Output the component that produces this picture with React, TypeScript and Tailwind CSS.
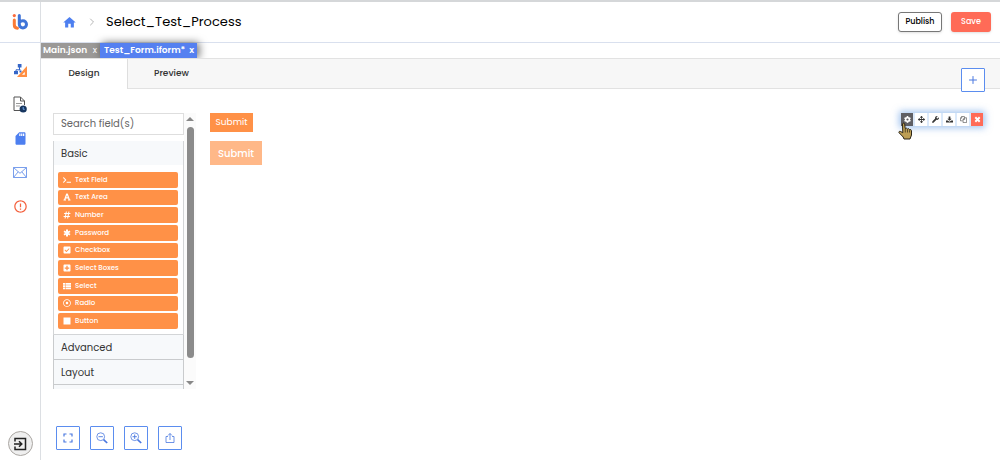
import { useState } from "react";
import {
  FaArrowsAlt, FaCheckSquare, FaCog, FaFont, FaHashtag,
  FaPlusSquare, FaRegDotCircle, FaTerminal, FaWrench,
} from "react-icons/fa";
import { MdHome, MdSdCard, MdErrorOutline } from "react-icons/md";
import { Plus, ChevronRight } from "lucide-react";

type IconProps = { className?: string };

function AsteriskIcon({ className }: IconProps) {
  return (
    <svg viewBox="0 0 16 16" className={className} stroke="currentColor" strokeWidth="4">
      <path d="M8 1v14M2 4.500l12 7M14 4.500l-12 7" />
    </svg>
  );
}

function ListIcon({ className }: IconProps) {
  return (
    <svg viewBox="0 0 16 16" className={className} fill="currentColor">
      <path d="M0 2h5v3.500H0zM6 2h10v3.500H6zM0 6.500h5V10H0zM6 6.500h10V10H6zM0 11h5v3.500H0zM6 11h10v3.500H6z" />
    </svg>
  );
}

function SquareIcon({ className }: IconProps) {
  return (
    <svg viewBox="0 0 16 16" className={className} fill="currentColor">
      <path d="M1 1h14v14H1z" />
    </svg>
  );
}

function PasteIcon({ className }: IconProps) {
  return (
    <svg viewBox="0 0 16 16" className={className} fill="currentColor">
      <path d="M6 1h4v5h3L8 11 3 6h3zM0 10h4l4 3 4-3h4v5H0z" />
    </svg>
  );
}

function CopyIcon({ className }: IconProps) {
  return (
    <svg viewBox="0 0 16 16" className={className} fill="none" stroke="currentColor" strokeWidth="1.500">
      <path d="M6 11H1V5l3-4h6v3M4 1v4H1M7 15V8l3-4h5v11zM10.500 4v4H7" />
    </svg>
  );
}

function CloseIcon({ className }: IconProps) {
  return (
    <svg viewBox="0 0 16 16" className={className} stroke="currentColor" strokeWidth="4.500">
      <path d="m3 3 10 10M13 3 3 13" />
    </svg>
  );
}

const fields = [
  { label: "Text Field", icon: FaTerminal },
  { label: "Text Area", icon: FaFont },
  { label: "Number", icon: FaHashtag },
  { label: "Password", icon: AsteriskIcon },
  { label: "Checkbox", icon: FaCheckSquare },
  { label: "Select Boxes", icon: FaPlusSquare },
  { label: "Select", icon: ListIcon },
  { label: "Radio", icon: FaRegDotCircle },
  { label: "Button", icon: SquareIcon },
];

function Logo() {
  return (
    <svg viewBox="0 0 16 18" className="w-4 h-[18px]" fill="none">
      <circle cx="2.3" cy="2.6" r="1.6" fill="#fb6b3c" />
      <path d="M2.300 7v4.500a3.600 3.600 0 0 0 3.200 3.700" stroke="#fb7a35" strokeWidth="3" strokeLinecap="round" />
      <path d="M7.300 2.500v8.800a3.600 3.600 0 1 0 3.600-3.600c-.8 0-1.400.2-2 .6" stroke="#3f74d8" strokeWidth="3" strokeLinecap="round" />
    </svg>
  );
}

function ProcessIcon() {
  return (
    <svg viewBox="0 0 13 13" className="size-[13px]">
      <path d="M5.500 3v3M2 8V5.800h4.500" stroke="#3566c8" strokeWidth="1" fill="none" />
      <path d="M3.800 0h3.700v3.500H3.800zM0 7h4v3.300H0zM5.500 6.500h2v2h-2z" fill="#3566c8" />
      <path fillRule="evenodd" d="M13 2v11H3zM10.800 8v2.800H8z" fill="#ff8f43" />
    </svg>
  );
}

function DocumentIcon() {
  return (
    <svg viewBox="0 0 14 17" className="w-[14px] h-[17px]" fill="none">
      <path d="M7.500 14.500H1V1h6.500l4 4v4M7.500 1v4h4" stroke="#555" strokeWidth="1" />
      <path d="M3 7.500h6M3 10h4" stroke="#999" strokeWidth="1" />
      <circle cx="10.200" cy="13" r="3.600" fill="#17365f" />
      <path d="M10.200 11v2.300h1.500" stroke="#73a6e8" strokeWidth="1" />
    </svg>
  );
}

function MailIcon() {
  return (
    <svg viewBox="0 0 14 11" className="w-[14px] h-[11px]" fill="none" stroke="#6b94ea" strokeWidth="0.9">
      <path d="M.5.5h13v10H.5zM.5.5 7 6.300l6.500-5.800M.5 10.500l4.700-5.700M13.500 10.500 8.800 4.800" />
    </svg>
  );
}

function FullscreenIcon() {
  return (
    <svg viewBox="0 0 12 12" className="size-3" fill="none" stroke="#4a78e0" strokeWidth="1.200">
      <path d="M2 4.500V2h2.500M7.500 2H10v2.500M10 7.500V10H7.500M4.500 10H2V7.500" />
    </svg>
  );
}

function ZoomIcon({ plus }: { plus?: boolean }) {
  return (
    <svg viewBox="0 0 12 12" className="size-3" fill="none" stroke="#4a78e0">
      <circle cx="4.700" cy="4.700" r="3.900" strokeWidth="0.800" />
      <path d={plus ? "M2.500 4.700h4.400M4.700 2.500v4.400" : "M2.500 4.700h4.400"} strokeWidth="0.900" />
      <path d="m7.600 7.600 3.600 3.400" strokeWidth="1.700" />
    </svg>
  );
}

function ShareIcon() {
  return (
    <svg viewBox="0 0 12 12" className="size-3" fill="none" stroke="#4a78e0" strokeWidth="0.800">
      <path d="M4 4.500H2v6h8v-6H8M6 8V1.500M4 3.500l2-2 2 2" />
    </svg>
  );
}

function ExitIcon() {
  return (
    <svg viewBox="0 0 14 14" className="size-[14px]" fill="none" stroke="#222" strokeWidth="1.500">
      <path d="M2 4.500V1.500h10.500v11H2V9.500M1 7h7.500M6 4.200 8.800 7 6 9.800" />
    </svg>
  );
}

function HandCursor() {
  return (
    <svg viewBox="0 0 14 18" className="absolute top-[9px] -left-[3px] w-[14px] h-[18px] pointer-events-none">
      <path
        d="M4.500 2c.2-1.200 1.900-1.200 2.200 0l.5 4.500 1.300-.3.900.8 1.300-.3.900.9 1.100-.1.800 1.300v4.200L12 17H6l-.8-2L1 10.700c-.5-1 .7-1.900 1.700-1.200l2.100 1.300z"
        fill="#bd9f55"
        stroke="#2c2618"
        strokeWidth="1"
      />
      <path d="M7.300 7v3.500M9.500 7.500v3M11.500 8.200v2.300" stroke="#2c2618" strokeWidth="0.700" />
    </svg>
  );
}

const navItems = [
  { label: "Processes", icon: <ProcessIcon /> },
  { label: "Forms", icon: <DocumentIcon /> },
  { label: "Storage", icon: <MdSdCard className="size-[15px] text-[#4d7ff0]" /> },
  { label: "Mail", icon: <MailIcon /> },
  { label: "Errors", icon: <MdErrorOutline className="size-[15px] text-[#f4623f]" /> },
];

const viewTools = [
  { label: "Fullscreen", icon: <FullscreenIcon /> },
  { label: "Zoom out", icon: <ZoomIcon /> },
  { label: "Zoom in", icon: <ZoomIcon plus /> },
  { label: "Export", icon: <ShareIcon /> },
];

const componentTools = [
  { label: "Edit", icon: FaCog, style: "bg-[#5f5f64] text-white" },
  { label: "Move", icon: FaArrowsAlt, style: "bg-white text-[#333]" },
  { label: "Edit JSON", icon: FaWrench, style: "bg-white text-[#333]" },
  { label: "Paste below", icon: PasteIcon, style: "bg-white text-[#333]" },
  { label: "Copy", icon: CopyIcon, style: "bg-white text-[#555]" },
  { label: "Remove", icon: CloseIcon, style: "bg-[#ff6b57] text-white" },
];

export default function App() {
  const [search, setSearch] = useState("");
  const [tab, setTab] = useState("Design");

  return (
    <div className="flex min-h-screen bg-white font-['Poppins','Inter',sans-serif] text-[#333] border-t-2 border-[#d5d7d9]">
      <aside className="w-10 box-content shrink-0 border-r border-[#dcdfe3] flex flex-col items-center">
        <div className="h-[41px] w-full border-b border-[#d9e0ee] flex items-center justify-center">
          <Logo />
        </div>
        <nav className="mt-[18px] flex flex-col items-center gap-4">
          {navItems.map((item) => (
            <button key={item.label} aria-label={item.label} className="h-[18px] w-5 flex items-center justify-center">
              {item.icon}
            </button>
          ))}
        </nav>
        <button aria-label="Log out" className="mt-auto mb-1 size-[25px] rounded-full border border-[#aaa6a2] bg-[#efefef] flex items-center justify-center">
          <ExitIcon />
        </button>
      </aside>

      <div className="flex-1 min-w-0 flex flex-col">
        <header className="h-[41px] border-b border-[#d9e0ee] flex items-center pl-[21px] pr-[9px]">
          <a href="#" aria-label="Home"><MdHome className="size-[15px] text-[#4d7ff0]" /></a>
          <ChevronRight className="ml-[9px] size-3 text-[#b5b5b5]" strokeWidth={2} />
          <h1 className="ml-2 text-[13px] text-black">Select_Test_Process</h1>
          <div className="ml-auto flex items-center gap-[9px]">
            <button className="h-5 w-11 rounded-[3px] border border-[#777] bg-white text-[8px] font-medium text-black shadow-sm">Publish</button>
            <button className="h-5 w-10 rounded-[3px] bg-[#ff6b57] text-[8px] font-medium text-white shadow-sm">Save</button>
          </div>
        </header>

        <div className="h-[15px] flex text-[9px] font-semibold text-white">
          <div className="w-[59px] bg-[#9b9997] flex items-center justify-between pl-[2px] pr-[3px]">
            <button>Main.json</button>
            <button aria-label="Close Main.json" className="font-normal">x</button>
          </div>
          <div className="relative w-[97px] bg-[#5580f0] shadow-[2px_0_8px_rgba(0,0,0,0.6)] flex items-center justify-between pl-1 pr-[3px]">
            <button>Test_Form.iform*</button>
            <button aria-label="Close Test_Form.iform">x</button>
          </div>
        </div>

        <div className="relative h-[31px] flex bg-[#f7f7f7] border-y border-[#e2e2e2] text-[9px] font-medium">
          {["Design", "Preview"].map((name) => (
            <button
              key={name}
              onClick={() => setTab(name)}
              className={tab === name ? "w-[87px] h-[30px] bg-white border-r border-[#dedede]" : "w-[87px] h-[30px]"}
            >
              {name}
            </button>
          ))}
          <button aria-label="Add" className="ml-auto mt-[9px] mr-[15px] size-6 shrink-0 rounded-[1px] border border-[#5b8def] bg-white text-[#4a78e0] flex items-center justify-center">
            <Plus className="size-3" strokeWidth={2} />
          </button>
        </div>

        <main className="flex-1 flex flex-col pt-6">
          <div className="flex">
            <div className="ml-3 h-[276px] w-[143px] shrink-0 flex overflow-hidden">
              <div className="w-[131px]">
                <input
                  aria-label="Search field(s)"
                  value={search}
                  onChange={(e) => setSearch(e.target.value)}
                  placeholder="Search field(s)"
                  className="block h-[22px] w-full border border-[#dedede] px-[7px] text-[10px] placeholder:text-[#666] focus:outline-none"
                />
                <div className="mt-[6px] border border-t-0 border-[#d3d5d7]">
                  <h2 className="h-6 bg-[#f7f9fb] text-[10px]">
                    <button className="h-full w-full px-[7px] text-left">Basic</button>
                  </h2>
                  <div className="h-[169px] pl-1 pr-[5px] pt-[7px] pb-[5px] grid auto-rows-fr gap-[2px]">
                    {fields
                      .filter((f) => f.label.toLowerCase().includes(search.toLowerCase()))
                      .map((f) => (
                        <button key={f.label} className="min-h-0 rounded-[2px] bg-[#ff9147] px-[5px] flex items-center gap-1 text-[7px] font-medium text-white">
                          <f.icon className="size-2 shrink-0" />
                          {f.label}
                        </button>
                      ))}
                  </div>
                </div>
                {["Advanced", "Layout"].map((name) => (
                  <h2 key={name} className="h-[25px] border border-t-0 border-[#c9cbcd] bg-[#f7f9fb] text-[10px]">
                    <button className="h-full w-full px-[7px] text-left">{name}</button>
                  </h2>
                ))}
                <div className="h-[25px] border-x border-[#c9cbcd] bg-[#f7f9fb]" />
              </div>
              <div className="w-3 bg-[#fbfbfb] flex flex-col items-center pt-1 pb-1">
                <div className="border-x-4 border-b-4 border-x-transparent border-b-[#888]" />
                <div className="mt-[6px] h-[231px] w-[7px] rounded-full bg-[#8b8b8b]" />
                <div className="mt-auto border-x-4 border-t-4 border-x-transparent border-t-[#888]" />
              </div>
            </div>

            <div className="ml-[14px] mr-[17px] flex-1 flex justify-between items-start">
              <div className="flex flex-col items-start gap-[9px]">
                <button className="h-[19px] w-[43px] bg-[#ff9147] text-[9px] text-white">Submit</button>
                <button className="h-6 w-[52px] bg-[#ffb888] text-[10px] font-medium text-white">Submit</button>
              </div>
              <div className="relative flex gap-[2px] bg-[#dbe9fa] shadow-[0_0_7px_2px_rgba(90,150,225,0.55)]">
                {componentTools.map((tool) => (
                  <button key={tool.label} aria-label={tool.label} className={`h-[13px] w-3 flex items-center justify-center ${tool.style}`}>
                    <tool.icon className="size-[7px]" />
                  </button>
                ))}
                <HandCursor />
              </div>
            </div>
          </div>

          <div className="mt-auto mb-[10px] ml-[15px] flex gap-[10px]">
            {viewTools.map((tool) => (
              <button key={tool.label} aria-label={tool.label} className="size-6 rounded-[1px] border border-[#5b8def] flex items-center justify-center">
                {tool.icon}
              </button>
            ))}
          </div>
        </main>
      </div>
    </div>
  );
}
